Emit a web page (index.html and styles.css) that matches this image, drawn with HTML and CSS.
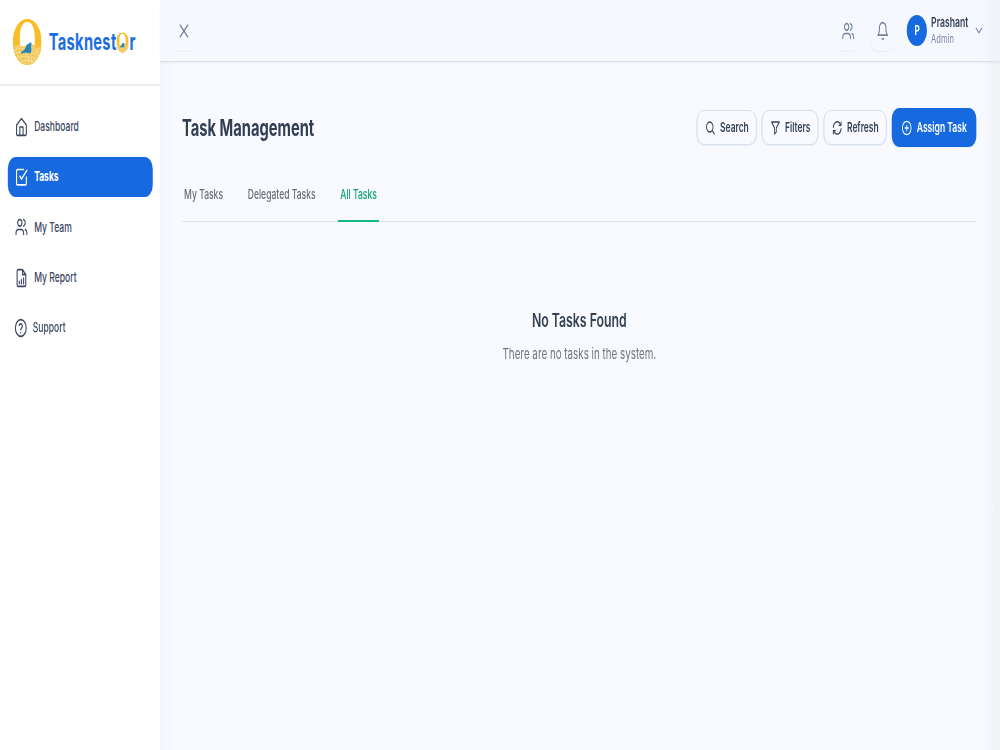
FILE: index.html
```html
<!DOCTYPE html>
<html lang="en">
<head>
<meta charset="utf-8">
<title>Tasknestor</title>
<link rel="stylesheet" href="styles.css">
</head>
<body>
<svg class="defs" width="0" height="0">
  <symbol id="nest" viewBox="0 0 44 46">
    <path fill="#f9bd25" fill-rule="evenodd" d="M22 0C35 0 44 10 44 23S35 46 22 46 0 36 0 23 9 0 22 0ZM22 3C14 3 10.500 10 10.500 19V30H33.500V19C33.500 10 30 3 22 3Z"/>
    <path fill="#f3cd68" d="M.7 28Q5 25 11 26.500T22 26T33 26.500T43.300 28C41 39 33 46 22 46S3 39 .7 28Z"/>
    <path fill="none" stroke="#fae3a0" stroke-width="1.200" stroke-dasharray="3 2" d="M3 31Q13 27 21 33T41 30M4 35Q14 31 23 37T40 34M8 39Q18 35 25 40T36 38M13 43Q21 39 31 43"/>
    <path fill="none" stroke="#dda932" stroke-width=".8" stroke-dasharray="2 3" d="M2 29Q14 34 23 29T42 32M4 36Q16 33 24 35T39 37M10 41Q20 38 33 41"/>
    <path fill="#2585bd" d="M12 33.500L18 30.500L21 26L24 24.800Q26 22.700 28.500 24L27.800 28Q29.500 31 27 34.500L20 33.500L13 34.500Z"/>
  </symbol>
  <symbol id="users" viewBox="0 0 24 24"><path d="M16 21v-2a4 4 0 0 0-4-4H6a4 4 0 0 0-4 4v2M22 21v-2a4 4 0 0 0-3-3.870M16 3.130a4 4 0 0 1 0 7.750"/><circle cx="9" cy="7" r="4"/></symbol>
</svg>
<div class="frame">
<div class="app">
  <aside class="sidebar">
    <div class="brand">
      <svg class="brand-mark"><use href="#nest"/></svg>
      <div class="brand-name"><span>Tasknest</span><svg class="brand-o"><use href="#nest"/></svg><span>r</span></div>
    </div>
    <nav class="menu">
      <a class="item"><svg class="icon" viewBox="0 0 24 24"><path d="M3 9.500L12 2l9 7.500v11a1.500 1.500 0 0 1-1.500 1.500H4.500a1.500 1.500 0 0 1-1.500-1.500ZM9 22V12h6v10"/></svg><span>Dashboard</span></a>
      <a class="item active"><svg class="icon" viewBox="0 0 24 24"><path d="M21 12v8a1.500 1.500 0 0 1-1.500 1.500h-15A1.500 1.500 0 0 1 3 20V4.500A1.500 1.500 0 0 1 4.500 3H16M9 11l3 3.500L22 4"/></svg><span>Tasks</span></a>
      <a class="item"><svg class="icon"><use href="#users"/></svg><span>My Team</span></a>
      <a class="item"><svg class="icon" viewBox="0 0 24 24"><path d="M14 2H6a2 2 0 0 0-2 2v16a2 2 0 0 0 2 2h12a2 2 0 0 0 2-2V8ZM14 2v6h6M8 19v-3M12 19v-5M16 19v-7"/></svg><span>My Report</span></a>
      <a class="item support"><svg class="icon" viewBox="0 0 24 24"><circle cx="12" cy="12" r="10"/><path d="M9.100 9a3 3 0 0 1 5.800 1c0 2-2.900 2.400-2.900 4M12 17.500v.1"/></svg><span>Support</span></a>
    </nav>
  </aside>
  <div class="page">
    <header class="topbar">
      <button class="tool close"><svg class="icon" viewBox="0 0 24 24"><path d="M5 5l14 14M19 5L5 19"/></svg></button>
      <div class="account">
        <button class="tool"><svg class="icon"><use href="#users"/></svg></button>
        <button class="tool"><svg class="icon" viewBox="0 0 24 24"><path d="M6 8a6 6 0 0 1 12 0c0 7 3 9 3 9H3s3-2 3-9M10.800 21.500h2.400"/></svg></button>
        <div class="avatar">P</div>
        <div class="who"><span class="name">Prashant</span><span class="role">Admin</span></div>
        <svg class="chevron" viewBox="0 0 24 24"><path d="M4 7l8 8 8-8"/></svg>
      </div>
    </header>
    <main class="content">
      <div class="heading">
        <h1>Task Management</h1>
        <div class="actions">
          <button class="btn search"><svg class="icon" viewBox="0 0 24 24"><circle cx="10.500" cy="10.500" r="7.500"/><path d="M16 16l5 5"/></svg><span>Search</span></button>
          <button class="btn filters"><svg class="icon" viewBox="0 0 24 24"><path d="M3 3h18l-7 9v6l-4 3v-9Z"/></svg><span>Filters</span></button>
          <button class="btn refresh"><svg class="icon" viewBox="0 0 24 24"><path d="M3 11a9 9 0 0 1 15.500-5.500L21 8M21 3v5h-5M21 13a9 9 0 0 1-15.500 5.500L3 16M3 21v-5h5"/></svg><span>Refresh</span></button>
          <button class="btn assign"><svg class="icon" viewBox="0 0 24 24"><circle cx="12" cy="12" r="10"/><path d="M12 8v8M8 12h8"/></svg><span>Assign Task</span></button>
        </div>
      </div>
      <div class="tabs"><a class="tab t1">My Tasks</a><a class="tab t2">Delegated Tasks</a><a class="tab t3 selected">All Tasks</a></div>
      <section class="empty"><h2>No Tasks Found</h2><p>There are no tasks in the system.</p></section>
    </main>
  </div>
</div>
</div>
</body>
</html>
```
FILE: styles.css
```css
* { box-sizing: border-box; }
body { margin: 0; width: 1000px; height: 750px; overflow: hidden; background: #f8faff; }
.defs { display: block; height: 0; }
.frame { width: 1000px; height: 750px; overflow: hidden; }
.app { display: flex; width: 1538.4px; height: 750px; transform: scaleX(.65); transform-origin: 0 0; font-family: Inter, sans-serif; color: #344054; }
button { font: inherit; color: inherit; border: 0; background: none; padding: 0; }
.icon { flex: none; width: 20px; height: 20px; fill: none; stroke: currentColor; stroke-width: 2; stroke-linecap: round; stroke-linejoin: round; }
.sidebar { width: 246.200px; flex: none; background: #fff; }
.brand { height: 86px; border-bottom: 2px solid #eaecf2; display: flex; align-items: center; padding-left: 20px; }
.brand-mark { width: 44px; height: 46px; flex: none; }
.brand-name { display: flex; align-items: center; margin-left: 11px; font-size: 22.500px; font-weight: 700; line-height: 28px; color: #1b6ee1; letter-spacing: .5px; }
.brand-o { width: 19px; height: 21px; margin: 0 1px 0 0; }
.menu { padding: 21px 11.500px; display: flex; flex-direction: column; gap: 11px; }
.item { height: 39.300px; border-radius: 12px; display: flex; align-items: center; gap: 10px; padding-left: 11px; font-size: 13.200px; font-weight: 500; color: #3b4660; }
.item span { padding-bottom: 1px; }
.item.support { gap: 9px; padding-left: 10px; }
.item.active { background: #1769df; color: #fff; font-weight: 700; font-size: 13.100px; }
.page { flex: 1; min-width: 0; display: flex; flex-direction: column; background: linear-gradient(90deg, #f3f5fa 0, #f8faff 24px, #f8faff calc(100% - 30px), #eff1f5 100%); }
.topbar { height: 62px; flex: none; display: flex; justify-content: space-between; align-items: center; padding: 0 25px 0 18px; border-bottom: 1px solid #dce2ec; background: linear-gradient(90deg, #f6faff 0, #f5f9ff calc(100% - 30px), #eff2f6 100%); box-shadow: 0 1px 2px rgba(40, 60, 100, .06); color: #76829f; }
.tool { width: 38px; height: 40px; border-radius: 11px; display: flex; align-items: center; justify-content: center; box-shadow: 0 2px 1px -1px rgba(40, 60, 100, .05); }
.tool .icon { stroke-width: 2; }
.account { display: flex; align-items: center; }
.account .tool + .tool { margin-left: 15px; }
.avatar { width: 31px; height: 31px; margin-left: 18px; border-radius: 50%; background: #1769df; color: #fff; font-size: 12.500px; font-weight: 700; display: flex; align-items: center; justify-content: center; padding-bottom: 1px; }
.who { display: flex; flex-direction: column; margin-left: 6px; width: 59px; line-height: 17px; white-space: nowrap; }
.name { font-size: 13.300px; font-weight: 600; color: #344054; }
.role { font-size: 11.700px; color: #7b88a5; }
.chevron { width: 14px; height: 14px; margin-left: 8px; fill: none; stroke: currentColor; stroke-width: 2.500; }
.content { padding: 46px 36px 0 34px; }
.heading { display: flex; align-items: center; justify-content: space-between; height: 39px; }
h1 { margin: 0; padding-top: 1px; font-size: 22.600px; font-weight: 700; line-height: 30px; color: #313d53; }
.actions { display: flex; align-items: center; gap: 8px; }
.btn { height: 35px; display: flex; align-items: center; justify-content: center; gap: 7px; border: 1px solid #cfd7e7; border-radius: 11px; font-size: 13px; font-weight: 600; white-space: nowrap; box-shadow: 0 1px 1px rgba(40, 60, 100, .06); }
.btn span { padding-bottom: 1px; }
.btn .icon { width: 16px; height: 16px; }
.search { width: 92px; }
.filters { width: 87px; }
.refresh { width: 97px; }
.assign { width: 130px; height: 39px; background: #1769df; border: 0; color: #fff; font-size: 13.200px; }
.tabs { display: flex; height: 55px; margin-top: 20px; border-bottom: 1px solid #dce1eb; font-size: 13.200px; font-weight: 500; color: #696f7a; }
.tab { height: 55px; line-height: 54px; white-space: nowrap; padding: 0 3px; }
.t2 { margin-left: 32px; }
.t3 { margin-left: 31px; padding-left: 4px; }
.selected { color: #16a574; border-bottom: 2px solid #12b981; }
.empty { margin-top: 86px; text-align: center; }
h2 { margin: 0; font-size: 18.900px; line-height: 26px; font-weight: 600; color: #344054; }
p { margin: 8px 0 0; font-size: 15.100px; line-height: 24px; color: #6f7580; }
```
